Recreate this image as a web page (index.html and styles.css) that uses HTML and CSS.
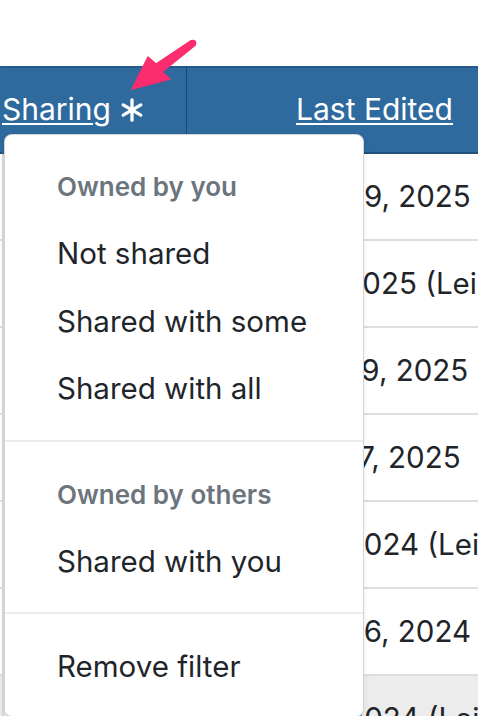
FILE: index.html
```html
<!DOCTYPE html>
<html lang="en">
<head>
  <meta charset="UTF-8" />
  <meta name="viewport" content="width=device-width, initial-scale=1.0"/>
  <title>Documents</title>
  <link rel="stylesheet" href="styles.css">
</head>
<body>

  <div class="page">
    <!-- annotation arrow pointing at the filter icon -->
    <svg class="callout" width="478" height="120" viewBox="0 0 478 120">
      <g fill="#fb2d6e" stroke="#fb2d6e" stroke-width="1.5" stroke-linejoin="round">
        <polygon points="132,89 148,57 156,64 191.2,40.6 194.8,45.4 162,72 170,79"/>
        <circle cx="193" cy="43" r="2.6"/>
      </g>
    </svg>

    <table class="docs">
      <colgroup>
        <col class="col-pad">
        <col class="col-sharing">
        <col class="col-edited">
      </colgroup>
      <thead>
        <tr>
          <th class="pad"></th>
          <th class="sharing">
            <a href="#" class="sort-link">Sharing</a><svg class="filter-icon" width="24" height="24" viewBox="0 0 24 24">
              <g stroke="#fff" stroke-width="3.3" stroke-linecap="round">
                <line x1="12" y1="1.8" x2="12" y2="22.2"/>
                <line x1="3.2" y1="6.9" x2="20.8" y2="17.1"/>
                <line x1="3.2" y1="17.1" x2="20.8" y2="6.9"/>
              </g>
            </svg>
          </th>
          <th class="edited"><a href="#" class="sort-link">Last Edited</a></th>
        </tr>
      </thead>
      <tbody>
        <tr><td class="pad"></td><td class="sharing">Shared with all</td><td class="edited">May 29, 2025</td></tr>
        <tr><td class="pad"></td><td class="sharing">Not shared</td><td class="edited">Jun 12, 2025 (Leila)</td></tr>
        <tr><td class="pad"></td><td class="sharing">Shared with some</td><td class="edited">Mar 29, 2025</td></tr>
        <tr><td class="pad"></td><td class="sharing">Not shared</td><td class="edited">Apr 17, 2025</td></tr>
        <tr><td class="pad"></td><td class="sharing">Shared with you</td><td class="edited">Dec 12, 2024 (Leila)</td></tr>
        <tr><td class="pad"></td><td class="sharing">Not shared</td><td class="edited">May 26, 2024</td></tr>
        <tr class="hover"><td class="pad"></td><td class="sharing"></td><td class="edited">Nov 14, 2024 (Leila)</td></tr>
      </tbody>
    </table>

    <div class="dropdown-menu">
      <h6 class="dropdown-header">Owned by you</h6>
      <a href="#" class="dropdown-item">Not shared</a>
      <a href="#" class="dropdown-item">Shared with some</a>
      <a href="#" class="dropdown-item">Shared with all</a>
      <hr class="dropdown-divider">
      <h6 class="dropdown-header">Owned by others</h6>
      <a href="#" class="dropdown-item">Shared with you</a>
      <hr class="dropdown-divider">
      <a href="#" class="dropdown-item">Remove filter</a>
    </div>
  </div>

</body>
</html>
```

FILE: styles.css
```css
html, body {
  margin: 0;
  height: 100%;
  overflow: hidden;
  background: #fff;
  font-family: Inter, "Noto Sans", sans-serif;
  color: #212529;
}

.page {
  position: relative;
  height: 716px;
  padding-top: 66px;
  box-sizing: border-box;
  overflow: hidden;
}

.callout {
  position: absolute;
  left: 0;
  top: 0;
  z-index: 3;
  pointer-events: none;
}

/* table */
.docs {
  border-collapse: separate;
  border-spacing: 0;
  table-layout: fixed;
  width: 578px;
  margin-left: -16px;
  font-size: 29.5px;
  line-height: 35.4px;
}

.col-pad { width: 18px; }
.col-sharing { width: 185px; }
.col-edited { width: 375px; }

.docs th {
  height: 84px;
  padding: 0;
  background: #2e6a9e;
  border-top: 2px solid #24598a;
  border-bottom: 2px solid #21507c;
  color: #fff;
  font-size: 30px;
  font-weight: 400;
  vertical-align: middle;
  text-align: left;
}

.docs th.sharing {
  border-left: 2px solid #2e6a9e;
  border-right: 1px solid #1c476f;
  white-space: nowrap;
}

.docs th.sharing .sort-link {
  margin-left: -2px;
}

.docs th.edited {
  text-align: center;
}

.sort-link {
  color: #fff;
  text-decoration: underline;
  text-decoration-thickness: 2px;
  text-underline-offset: 3px;
}

.filter-icon {
  margin-left: 9px;
  vertical-align: -2px;
}

.docs td {
  height: 85px;
  padding: 0;
  border-bottom: 2px solid #dedede;
  vertical-align: middle;
  white-space: nowrap;
  overflow: hidden;
}

.docs td.sharing {
  border-left: 2px solid #d9d9d9;
  border-right: 1px solid #dedede;
  padding-left: 12px;
}

.docs td.edited {
  text-align: center;
}

.docs tr.hover td {
  background: #ececec;
}

/* filter menu */
.dropdown-menu {
  position: absolute;
  left: 4px;
  top: 134px;
  width: 360px;
  box-sizing: border-box;
  padding: 18px 0 15px;
  background: #fff;
  border: 1px solid rgba(0,0,0,0.17);
  border-radius: 8px;
  box-shadow: 0 2px 6px rgba(0,0,0,0.08);
  z-index: 2;
}

.dropdown-header,
.dropdown-item {
  display: block;
  margin: 0;
  padding: 16px 16px 16px 52px;
  line-height: 35.4px;
  white-space: nowrap;
}

.dropdown-header {
  font-size: 26px;
  font-weight: 600;
  color: #6c757d;
}

.dropdown-item {
  font-size: 29.5px;
  color: #212529;
  text-decoration: none;
}

.dropdown-divider {
  height: 0;
  margin: 17px 0 19px;
  border: 0;
  border-top: 2px solid #e9ecef;
}
```
